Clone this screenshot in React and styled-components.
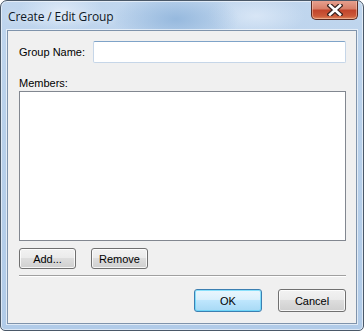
import React from 'react';
import styled, { createGlobalStyle } from 'styled-components';

const Global = createGlobalStyle`
  html, body { margin: 0; padding: 0; background: #fff; }
  body { width: 364px; height: 331px; overflow: hidden; }
`;

const Window = styled.div`
  box-sizing: border-box;
  width: 364px;
  height: 331px;
  display: flex;
  flex-direction: column;
  border: 1px solid #4a5868;
  border-radius: 7px 7px 5px 5px;
  background:
    radial-gradient(ellipse 90px 40px at 175px 18px, rgba(140,178,218,0.8), rgba(140,178,218,0) 70%),
    radial-gradient(ellipse 60px 30px at 60px 10px, rgba(228,238,250,0.8), rgba(228,238,250,0) 70%),
    radial-gradient(ellipse 70px 30px at 255px 15px, rgba(222,234,248,0.8), rgba(222,234,248,0) 70%),
    linear-gradient(#c0d6ee, #b8d0ea 40%, #b1cbe8);
  box-shadow: inset 0 0 0 1px rgba(255,255,255,0.55);
  font-family: "Liberation Sans", Arial, sans-serif;
  overflow: hidden;
`;

const TitleBar = styled.div`
  height: 29px;
  display: flex;
  align-items: flex-start;
  justify-content: space-between;
  padding-left: 7px;
`;

const Title = styled.div`
  font-family: "Open Sans", "Liberation Sans", sans-serif;
  font-size: 12px;
  color: #0e1826;
  margin-top: 7px;
  letter-spacing: -0.1px;
  text-shadow: 0 0 6px rgba(255,255,255,0.9);
`;

const CloseButton = styled.div`
  box-sizing: border-box;
  width: 47px;
  height: 20px;
  margin-right: 5px;
  margin-top: -1px;
  border: 1px solid #5a2a22;
  border-top: none;
  border-radius: 0 0 5px 5px;
  background: linear-gradient(#e8a493 0%, #d8806a 45%, #c2452c 55%, #cc5a3a 85%, #e08a60 100%);
  box-shadow: inset 0 0 0 1px rgba(255,220,200,0.45);
  display: flex;
  align-items: center;
  justify-content: center;
`;

const Frame = styled.div`
  flex: 1;
  display: flex;
  padding: 0 6px 6px 6px;
`;

const Client = styled.div`
  flex: 1;
  display: flex;
  flex-direction: column;
  background: #f0f0f0;
  border: 1px solid #7f93ab;
  box-shadow: 0 0 0 1px rgba(255,255,255,0.6);
  padding: 10px 10px 0 11px;
  font-size: 11px;
  color: #000;
`;

const FieldRow = styled.div`
  display: flex;
  align-items: center;
`;

const Label = styled.div`
  width: 74px;
  flex: none;
`;

const TextBox = styled.div`
  box-sizing: border-box;
  flex: 1;
  height: 22px;
  background: #fff;
  border: 1px solid #c6d6e8;
  border-top-color: #7fa3c8;
  border-radius: 2px;
`;

const SectionLabel = styled.div`
  margin-top: 14px;
  line-height: 13px;
`;

const ListBox = styled.div`
  box-sizing: border-box;
  margin-top: 1px;
  height: 150px;
  background: #fff;
  border: 1px solid #828790;
`;

const ButtonRow = styled.div`
  display: flex;
  gap: ${p => p.gap}px;
  justify-content: ${p => p.end ? 'flex-end' : 'flex-start'};
  margin-top: ${p => p.top}px;
`;

const Button = styled.div`
  box-sizing: border-box;
  width: ${p => p.w}px;
  height: ${p => p.h}px;
  display: flex;
  align-items: center;
  justify-content: center;
  border: 1px solid ${p => p.primary ? '#3c7fb1' : '#707070'};
  border-radius: 3px;
  background: ${p => p.primary
    ? 'linear-gradient(#eaf6fd 0%, #d9f0fc 45%, #bee6fd 50%, #a7d9f5 100%)'
    : 'linear-gradient(#f2f2f2 0%, #ebebeb 45%, #dddddd 50%, #cfcfcf 100%)'};
  box-shadow: inset 0 0 0 1px ${p => p.primary ? 'rgba(72,210,250,0.6)' : 'rgba(255,255,255,0.8)'};
  color: #000;
  font-size: 11px;
`;

const Separator = styled.div`
  height: 1px;
  margin-top: 6px;
  background: #a0a0a0;
  border-bottom: 1px solid #fff;
`;

const CloseIcon = () => (
  <svg width="16" height="12" viewBox="0 0 16 12">
    <path d="M3 1.5 L13 10.5 M13 1.5 L3 10.5" stroke="#3a2420" strokeWidth="5" strokeLinecap="square" />
    <path d="M3 1.5 L13 10.5 M13 1.5 L3 10.5" stroke="#ffffff" strokeWidth="2.6" strokeLinecap="square" />
  </svg>
);

export default function App() {
  return (
    <>
      <Global />
      <Window>
        <TitleBar>
          <Title>Create / Edit Group</Title>
          <CloseButton><CloseIcon /></CloseButton>
        </TitleBar>
        <Frame>
          <Client>
            <FieldRow>
              <Label>Group Name:</Label>
              <TextBox />
            </FieldRow>
            <SectionLabel>Members:</SectionLabel>
            <ListBox />
            <ButtonRow gap={15} top={7}>
              <Button w={57} h={21}>Add...</Button>
              <Button w={57} h={21}>Remove</Button>
            </ButtonRow>
            <Separator />
            <ButtonRow gap={16} top={12} end>
              <Button w={68} h={23} primary>OK</Button>
              <Button w={68} h={23}>Cancel</Button>
            </ButtonRow>
          </Client>
        </Frame>
      </Window>
    </>
  );
}
